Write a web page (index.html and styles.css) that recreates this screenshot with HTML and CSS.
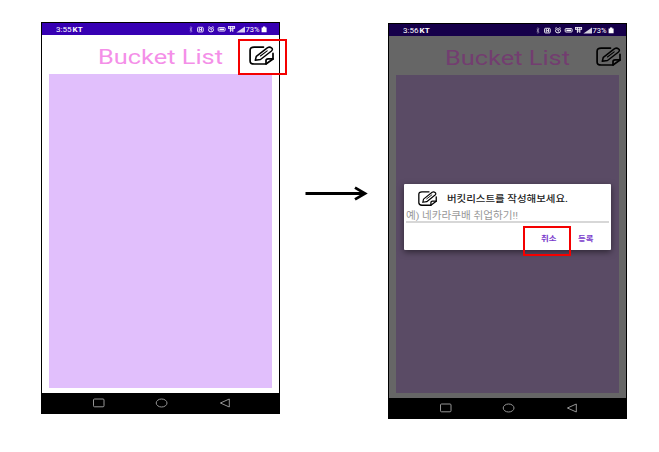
FILE: index.html
```
<!DOCTYPE html>
<html lang="ko">
<head>
<meta charset="utf-8">
<title>Bucket List</title>
<link rel="stylesheet" href="styles.css">
</head>
<body>
<svg width="0" height="0" class="defs">
  <symbol id="note" viewBox="0 0 25 19" preserveAspectRatio="none">
    <g fill="none" stroke="#000" stroke-width="1.7" stroke-linejoin="round" stroke-linecap="round">
      <path d="M14.5 1.1H5.2Q1.1 1.1 1.1 4.2V14.9Q1.1 18 5.2 18H17L24 13V7.4"/>
      <path d="M17 18V14.6Q17 12.9 19.2 12.9H24"/>
      <path d="M6.3 14.3L7.3 10.3L18.6 1.7Q20.6 .5 22.5 1.8Q24.4 3.3 22.5 5L11.5 13.5Z" stroke-width="1.5"/>
      <path d="M11.4 10L18.2 4.9" stroke-width="1.1"/>
    </g>
  </symbol>
  <symbol id="status" viewBox="0 0 82 13">
    <g fill="none" stroke="#fff" stroke-width=".9">
      <path d="M3.8 4.8L6 8.2L4.9 9.4V3.6L6 4.8L3.8 8.2" stroke-width=".5" opacity=".7"/>
      <rect x="11.6" y="4.3" width="5.6" height="4.6" rx=".8"/>
      <path d="M13.3 8.2V5.4L15.5 7.8V5"/>
      <ellipse cx="25" cy="6.8" rx="2.5" ry="2.1"/>
      <path d="M25 5.5V7H26M22.2 4.4L23.5 3.5M27.8 4.4L26.5 3.5"/>
      <rect x="32.2" y="4.6" width="6.9" height="3.4" rx=".7"/>
      <path d="M33.4 6.3H38" stroke-width="1.4"/>
      <path d="M42 3.6H49M42.3 5.3H48.7M42.6 3.4V5.7M44.4 3.4V8.9M46.8 3.4V8.9M48.6 3.4V5.7M44 7H47.2"/>
    </g>
    <path d="M50.4 9.4L59 3.6V9.4Z" fill="#fff" opacity=".82"/>
    <path d="M75.6 4.4H77V3.6H79.3V4.4H80.6V9.2H75.6Z" fill="#fff"/>
  </symbol>
  <symbol id="nav" viewBox="0 0 237 20">
    <g fill="none" stroke="#959595" stroke-width="1">
      <rect x="51.5" y="6" width="10.5" height="7.8" rx="1"/>
      <ellipse cx="119.6" cy="10" rx="5.4" ry="4"/>
      <path d="M187.3 6V14L178.4 10Z" stroke-linejoin="round"/>
    </g>
  </symbol>
</svg>
<main class="stage">
  <section class="phone first">
    <div class="status">
      <svg class="clock" width="40" height="12"><text x="0" y="9.2" textLength="15.5" lengthAdjust="spacingAndGlyphs">3:55</text><text x="16.6" y="9.2" class="bold" textLength="10" lengthAdjust="spacingAndGlyphs">KT</text></svg>
      <svg class="icons" width="82" height="13"><use href="#status"/><text x="59.6" y="9.4" textLength="14" lengthAdjust="spacingAndGlyphs">73%</text></svg>
    </div>
    <header class="header">
      <svg class="title" width="128" height="24"><text x="0" y="18" textLength="125" lengthAdjust="spacingAndGlyphs">Bucket List</text></svg>
      <svg class="edit" width="25" height="19"><use href="#note"/></svg>
      <span class="mark edit-mark"></span>
    </header>
    <div class="list"></div>
    <svg class="nav" width="237" height="20"><use href="#nav"/></svg>
  </section>
  <svg class="arrow" width="64" height="16" fill="none" stroke="#000"><path d="M.5 8.5H60" stroke-width="3"/><path d="M50 2.6L60 8.5L50 14.4" stroke-width="2.8"/></svg>
  <section class="phone second">
    <div class="status">
      <svg class="clock" width="40" height="12"><text x="0" y="9.2" textLength="15.5" lengthAdjust="spacingAndGlyphs">3:56</text><text x="16.6" y="9.2" class="bold" textLength="10" lengthAdjust="spacingAndGlyphs">KT</text></svg>
      <svg class="icons" width="82" height="13"><use href="#status"/><text x="59.6" y="9.4" textLength="14" lengthAdjust="spacingAndGlyphs">73%</text></svg>
    </div>
    <header class="header">
      <svg class="title" width="128" height="24"><text x="0" y="18" textLength="125" lengthAdjust="spacingAndGlyphs">Bucket List</text></svg>
      <svg class="edit" width="25" height="19"><use href="#note"/></svg>
    </header>
    <div class="list"></div>
    <svg class="nav" width="237" height="20"><use href="#nav"/></svg>
    <div class="dialog">
      <div class="heading">
        <svg width="19" height="15"><use href="#note"/></svg>
        <svg class="question" width="124" height="15"><text x="0" y="11" textLength="121" lengthAdjust="spacingAndGlyphs">버킷리스트를 작성해보세요.</text></svg>
      </div>
      <div class="field"><svg width="120" height="14"><text x="0" y="11" textLength="112" lengthAdjust="spacingAndGlyphs">예) 네카라쿠배 취업하기!!</text></svg></div>
      <div class="actions">
        <svg width="16" height="12"><text x="0" y="8.8" textLength="15.5" lengthAdjust="spacingAndGlyphs">취소</text></svg>
        <svg width="16" height="12"><text x="0" y="8.8" textLength="15.5" lengthAdjust="spacingAndGlyphs">등록</text></svg>
      </div>
      <span class="mark cancel-mark"></span>
    </div>
  </section>
</main>
</body>
</html>
```
FILE: styles.css
```
* { box-sizing: border-box; }
body { margin: 0; background: #fff; font-family: Roboto, "Noto Sans CJK KR", sans-serif; }
svg { display: block; flex: none; }
.defs { position: absolute; }
.stage { display: flex; align-items: flex-start; width: 659px; height: 452px; padding: 22px 0 0 41px; }
.phone { position: relative; display: flex; flex-direction: column; flex: none; width: 239px; height: 392px; border: 1px solid #000; background: #fff; }
.second { height: 396px; margin: 1px 0 0 19px; background: #666; }
.status { display: flex; height: 12px; flex: none; background: #3700b3; padding-left: 14px; font-size: 6.8px; fill: #fff; }
.second .status { background: #16004a; }
.clock { margin-right: 90px; }
.bold { font-weight: 700; }
.header { position: relative; display: flex; height: 39px; flex: none; padding: 11px 0 0 56px; }
.title { font-size: 19.5px; fill: #f48fe8; margin-right: 23px; }
.second .title { fill: #733d70; }
.list { flex: 1; margin: 0 7px 5px; background: #e1bffc; }
.second .list { background: #5a4b65; }
.nav { background: #000; flex: none; }
.arrow { margin: 163px 0 0 25px; }
.mark { position: absolute; border: 2px solid #f40000; }
.edit-mark { left: 196px; top: 4px; width: 49px; height: 36px; }
.dialog { position: absolute; left: 15px; top: 160px; width: 207px; height: 66px; background: #fff; border-radius: 1px; box-shadow: 0 2px 6px rgba(0,0,0,.5); }
.heading { display: flex; height: 24px; padding: 7px 0 0 14px; gap: 10px; }
.question { font-size: 9.2px; font-weight: 500; fill: #222; }
.field { height: 15px; margin: 0 2px; border-bottom: 2px solid #d7d7d7; font-size: 9.8px; fill: #979797; }
.actions { display: flex; gap: 21px; padding: 9px 0 0 137px; font-size: 6.8px; font-weight: 700; fill: #7939cc; }
.cancel-mark { left: 119px; top: 42px; width: 48px; height: 30px; }
```
